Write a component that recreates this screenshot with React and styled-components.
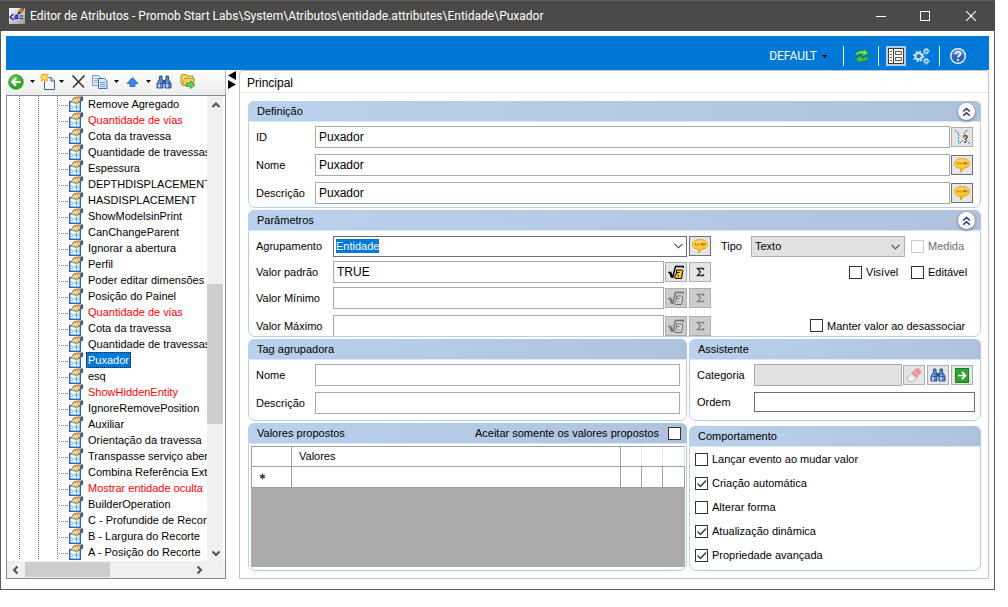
import React, { useEffect, useRef } from "react";
import styled, { createGlobalStyle, css } from "styled-components";

const Global = createGlobalStyle`
  *, *::before, *::after { box-sizing: border-box; }
  body { margin: 0; background: #fff; }
  body, button, input, select, table {
    font-family: "Liberation Sans", Arial, sans-serif;
    font-size: 11px;
    line-height: 14px;
    color: #000;
  }
  button { padding: 0; border: 0; background: none; display: inline-flex; align-items: center; justify-content: center; }
  svg { display: block; flex: none; }
`;

const Page = styled.div`
  min-height: 100vh;
  display: flex;
  padding: 0 13px 17px 0;
`;
const Window = styled.main`
  flex: 1;
  min-width: 0;
  display: flex;
  flex-direction: column;
  border: 1px solid #5b5b5b;
  border-top: 0;
  background: #fff;
`;

/* ---------- title bar ---------- */
const TitleBar = styled.header`
  height: 31px;
  margin: 0 -1px;
  padding: 0 2px 0 9px;
  display: flex;
  align-items: center;
  background: #4b4a48;
  border-top: 1px solid #5e5d5b;
`;
const Title = styled.h1`
  flex: 1;
  min-width: 0;
  margin: 0 0 0 5px;
  font: 400 12px/16px Roboto, "Noto Sans", sans-serif;
  color: #fff;
  white-space: nowrap;
  overflow: hidden;
`;
const CaptionButton = styled.button`
  width: 45px;
  height: 30px;
`;

/* ---------- ribbon ---------- */
const Content = styled.div`
  flex: 1;
  display: flex;
  flex-direction: column;
  padding: 5px 5px 10px;
`;
const Ribbon = styled.nav`
  height: 34px;
  flex: none;
  padding: 6px 21px 0 0;
  display: flex;
  align-items: center;
  justify-content: flex-end;
  background: #0078d7;
`;
const ProfileButton = styled.button`
  gap: 5px;
  margin-right: 16px;
  font: 400 12px/16px Roboto, "Noto Sans", sans-serif;
  color: #fff;
`;
const RibbonDivider = styled.span`
  width: 1px;
  height: 20px;
  background: #e6f1fb;
`;
const RibbonButton = styled.button`
  width: 20px;
  height: 20px;
  margin: ${(p) => p.$space};
  background: ${(p) => (p.$active ? "#b9cde6" : "none")};
`;

/* ---------- body ---------- */
const Body = styled.div`
  flex: 1;
  display: flex;
`;
const Sidebar = styled.aside`
  flex: none;
  width: 220px;
  display: flex;
  flex-direction: column;
`;
const Tools = styled.div`
  height: 25px;
  flex: none;
  display: flex;
  align-items: center;
  padding: 0 0 2px 2px;
  background: linear-gradient(#fefefe, #ededed);
  border-right: 1px solid #b4b4b4;
`;
const Tool = styled.button`
  width: 16px;
  height: 18px;
  margin-left: ${(p) => p.$gap || 0}px;
`;
const CaretTool = styled.button`
  width: ${(p) => (p.$narrow ? 10 : 16)}px;
  height: 18px;
`;
const TreeBox = styled.div`
  flex: 1;
  display: grid;
  grid-template-columns: minmax(0, 1fr) 16px 2px;
  grid-template-rows: 1fr 17px;
  border: 1px solid #828790;
`;
const Tree = styled.ul`
  list-style: none;
  margin: 0;
  padding: 0;
  overflow: hidden;
`;
const dotsDown = "repeating-linear-gradient(#767676 0 1px, #fff 1px 2px)";
const dotsAcross = "repeating-linear-gradient(90deg, #767676 0 1px, #fff 1px 2px)";
const TreeRow = styled.li`
  height: 16px;
  padding-left: 62px;
  display: flex;
  align-items: center;
  background: ${dotsDown} 12px 0 / 1px 16px no-repeat, ${dotsDown} 31px 0 / 1px 16px no-repeat,
    ${dotsDown} 50px 0 / 1px 16px no-repeat, ${dotsAcross} 52px 9px / 10px 1px no-repeat;
`;
const TreeLabel = styled.span`
  height: 16px;
  margin-left: 2px;
  padding: 0 2px;
  line-height: 16px;
  white-space: nowrap;
  color: ${(p) => (p.$red ? "#ff0000" : "#000")};
  ${(p) =>
    p.$selected &&
    css`
      color: #fff;
      background: #0078d7;
      outline: 1px dotted #10243a;
      outline-offset: -1px;
    `}
`;
const VScroll = styled.div`
  display: flex;
  flex-direction: column;
  background: #f0f0f0;
`;
const HScroll = styled.div`
  grid-column: 1 / 4;
  padding-right: 18px;
  display: flex;
  background: #f0f0f0;
`;
const ScrollArrow = styled.button`
  width: 17px;
  height: 17px;
  flex: none;
`;
const VThumb = styled.div`
  height: 140px;
  margin: auto 0 120px;
  background: #cdcdcd;
`;
const HThumb = styled.div`
  width: 85px;
  height: 15px;
  margin: 1px auto 0 1px;
  background: #cdcdcd;
`;
const Splitter = styled.div`
  width: 13px;
  flex: none;
  padding: 1px 2px;
`;

/* ---------- property panel ---------- */
const Panel = styled.section`
  flex: 1;
  min-width: 0;
  display: flex;
  flex-direction: column;
  border: 1px solid #c3c3c3;
  border-radius: 4px 4px 0 0;
`;
const PanelTitle = styled.h2`
  height: 22px;
  margin: 0;
  padding: 0 7px;
  font-size: 12px;
  font-weight: 400;
  line-height: 24px;
  border-bottom: 1px solid #e3e3e3;
`;
const Groups = styled.div`
  flex: 1;
  padding: 8px 7px 7px 8px;
  display: flex;
  flex-direction: column;
  gap: 2px;
`;
const LowerGroups = styled.div`
  flex: 1;
  display: grid;
  grid-template-columns: minmax(0, 1fr) 292px;
  gap: 2px;
`;
const Column = styled.div`
  display: flex;
  flex-direction: column;
  gap: ${(p) => p.$gap}px;
`;
const GroupBox = styled.section`
  flex: ${(p) => (p.$grow ? 1 : "none")};
  display: flex;
  flex-direction: column;
  border: 1px solid #b5cee9;
  border-radius: 7px;
`;
const GroupHeader = styled.div`
  height: 21px;
  margin: -1px -1px 0;
  padding: 0 6px 0 9px;
  flex: none;
  display: flex;
  align-items: center;
  justify-content: space-between;
  background: linear-gradient(90deg, #b9d1ec, #afc2dd);
  border-bottom: 1px solid #dbe6f4;
  border-radius: 6px 6px 0 0;
`;
const GroupTitle = styled.h3`
  margin: 0;
  font-size: 11px;
  font-weight: 400;
`;
const CollapseButton = styled.button`
  width: 17px;
  height: 17px;
  margin-top: 1px;
  border-radius: 50%;
  background: #fff;
  box-shadow: 0 1px 2px 1px #8592aa;
`;
const GroupBody = styled.div`
  flex: 1;
  padding: ${(p) => p.$pad || "4px 7px"};
  display: flex;
  flex-direction: column;
  gap: ${(p) => p.$gap || 0}px;
`;
const Field = styled.div`
  height: 22px;
  display: flex;
  align-items: center;
  gap: 1px;
`;
const FieldLabel = styled.label`
  width: ${(p) => p.$width || 58}px;
  flex: none;
`;
const TextInput = styled.input`
  flex: 1;
  min-width: 0;
  width: 100%;
  height: ${(p) => (p.$strong ? 20 : 22)}px;
  padding: 0 3px 1px;
  font-size: 12px;
  border: 1px solid ${(p) => (p.$strong ? "#707070" : "#a9a9b0")};
  border-radius: 0;
  background: ${(p) => (p.disabled ? "#e1e1e1" : "#fff")};
  outline: 0;
  ${(p) => p.$open && "height: 100%; border-bottom: 0;"}
`;
const SquareButton = styled.button`
  width: 22px;
  height: 20px;
  flex: none;
  border: 1px solid ${(p) => (p.$strong ? "#707070" : "#adadad")};
  background: ${(p) => (p.disabled ? "#cccccc" : "#e5e5e5")};
  & + & { margin-left: 1px; }
`;
const Parameters = styled.div`
  display: flex;
  padding: 4px 7px 0;
`;
const ParameterFields = styled.div`
  flex: 1;
  min-width: 0;
  display: flex;
  flex-direction: column;
  gap: 4px;
`;
const ParameterOptions = styled.div`
  width: 262px;
  flex: none;
  padding: 0 2px 0 10px;
  display: flex;
  flex-direction: column;
  gap: 4px;
`;
const OptionRow = styled.div`
  height: ${(p) => (p.$top ? 21 : 22)}px;
  display: flex;
  align-items: center;
  margin-top: ${(p) => p.$top || 0}px;
`;
const LastField = styled(Field)`
  height: 21px;
  margin-top: 2px;
`;
const PickerField = styled(Field)`
  padding-right: 2px;
`;
const Combo = styled.div`
  flex: 1;
  min-width: 0;
  height: 21px;
  margin-right: 1px;
  padding: 0 3px 0 2px;
  display: flex;
  align-items: center;
  border: 1px solid #6e6e6e;
`;
const ComboInput = styled.input`
  flex: 1;
  min-width: 0;
  height: 14px;
  padding: 0;
  border: 0;
  outline: 0;
  background: none;
  &::selection { background: #0078d7; color: #fff; }
`;
const SelectWrap = styled.span`
  position: relative;
  width: 154px;
  height: 21px;
  margin-right: 6px;
  display: flex;
  & > svg { position: absolute; right: 5px; top: 8px; pointer-events: none; }
`;
const Select = styled.select`
  flex: 1;
  appearance: none;
  padding: 0 3px;
  border: 1px solid #adadad;
  border-radius: 0;
  background: #e1e1e1;
`;
const CheckLabel = styled.label`
  display: inline-flex;
  align-items: center;
  gap: 4px;
  white-space: nowrap;
  color: ${(p) => (p.$dim ? "#6d6d6d" : "#000")};
  flex-direction: ${(p) => (p.$reverse ? "row-reverse" : "row")};
  ${(p) => p.$reverse && "gap: 9px;"}
  ${(p) => p.$width && `width: ${p.$width}px;`}
`;
const checkMark =
  "url(\"data:image/svg+xml,%3Csvg xmlns='http://www.w3.org/2000/svg' width='11' height='11'%3E%3Cpath d='M1.5 5.5l3 3 5.500-6' fill='none' stroke='%23333' stroke-width='1.300'/%3E%3C/svg%3E\")";
const Check = styled.input.attrs({ type: "checkbox" })`
  appearance: none;
  width: 13px;
  height: 13px;
  margin: 0;
  flex: none;
  border: 1px solid #333;
  background: #fff;
  &:checked { background: #fff ${checkMark} center no-repeat; }
  &:disabled { border-color: #cccccc; }
`;
const CheckList = styled.div`
  display: flex;
  flex-direction: column;
  padding: 0 5px;
`;
const CheckRow = styled.div`
  height: 24px;
  display: flex;
  align-items: center;
`;
const OptionsRight = styled(OptionRow)`
  justify-content: flex-end;
  gap: 2px;
`;

/* ---------- values grid ---------- */
const GridArea = styled.div`
  flex: 1;
  margin: 2px 1px 3px 2px;
  background: #ababab;
  border-top: 1px solid #a0a0a0;
`;
const ValuesTable = styled.table`
  width: 100%;
  table-layout: fixed;
  border-collapse: collapse;
  background: #fff;
  th, td { height: 21px; padding: 0 7px; font-weight: 400; text-align: left; border: 1px solid #a0a0a0; }
  th { height: 19px; border-top: 0; }
  th + th + th { border-left-color: #e3e3e3; border-right-color: #e3e3e3; }
`;
const Col = styled.col`
  width: ${(p) => p.$w}px;
`;

/* ---------- icons ---------- */
const Caret = ({ color = "#000" }) => (
  <svg width="5" height="3" viewBox="0 0 5 3"><path d="M0 0h5L2.500 3z" fill={color} /></svg>
);
const Chevron = ({ dir = "down", color = "#505050", w = 2 }) => {
  const d = { down: "M1.500 3.500L5 7l3.500-3.500", up: "M1.500 7L5 3.500 8.500 7", left: "M6.500 1.500L3 5l3.500 3.500", right: "M3.500 1.500L7 5 3.500 8.500" }[dir];
  return <svg width="10" height="10" viewBox="0 0 10 10"><path d={d} fill="none" stroke={color} strokeWidth={w} /></svg>;
};
const SelectArrow = () => (
  <svg width="9" height="6" viewBox="0 0 9 6"><path d="M.5.8l4 4 4-4" fill="none" stroke="#444" strokeWidth="1.100" /></svg>
);
const AppIcon = () => (
  <svg width="16" height="16" viewBox="0 0 16 16">
    <defs><linearGradient id="app" x1="0" y1="0" x2="1" y2="1"><stop offset="0" stopColor="#fff" /><stop offset="1" stopColor="#9a9a9a" /></linearGradient></defs>
    <rect width="16" height="16" fill="url(#app)" />
    <path d="M4.500 6L1 9l3.500 3M9 7.500H7c-1 0-1.500 2-1 3 .8.700 2.300-.8 2.500-3V11M10.500 8h3.500M10.500 10.500h3.500" fill="none" stroke="#1414c8" strokeWidth="1.200" />
    <path d="M9.500 4L11 1.500 13 0h2l-1 3-2.500 2.500z" fill="#d87a16" stroke="#3b2409" strokeWidth=".6" />
    <path d="M7.500 7l2-3 2 1.500z" fill="#222" />
  </svg>
);
const AttributeIcon = () => (
  <svg width="15" height="16" viewBox="0 0 15 16">
    <rect x=".7" y="5.700" width="10.600" height="9.600" fill="#eef6fd" stroke="#1668c2" strokeWidth="1.400" />
    <path d="M7.500 8.500v5M5 11h5" stroke="#5a9fde" />
    <path d="M2.500 10.500h1.500M2.500 12.500h1.500" stroke="#74ade2" />
    <path d="M1.500 6L5 2l3-1h4v3.500L9 6.500 7.500 7.500 6 6.800z" fill="#edbd6b" />
    <path d="M1.500 6L5 2l3-1h3M4 6.500l2.500.5 1 1L12 4.500" fill="none" stroke="#7a5526" strokeWidth=".8" />
    <path d="M4 5.300l3-2M6 5.800l3-2" stroke="#fff3cf" strokeWidth=".8" />
    <path d="M11.300.5H14v4.300l-2.700.700z" fill="#40507c" />
  </svg>
);
const BackIcon = () => (
  <svg width="16" height="16" viewBox="0 0 16 16">
    <defs><radialGradient id="back" cx=".4" cy=".3"><stop offset="0" stopColor="#7ed957" /><stop offset="1" stopColor="#2fa82c" /></radialGradient></defs>
    <circle cx="8" cy="8" r="7.300" fill="url(#back)" stroke="#1f931f" strokeWidth=".8" />
    <path d="M12.500 8H4.500M8 4.300L4.300 8 8 11.700" fill="none" stroke="#fff" strokeWidth="2" />
  </svg>
);
const NewIcon = () => (
  <svg width="16" height="18" viewBox="0 0 16 18">
    <path d="M4.500 4.500h6.500l3.500 3.500v8.500h-10z" fill="#f4f7fc" stroke="#4c5f88" />
    <path d="M11 4.500V8h3.500" fill="#c9d6ea" stroke="#4c5f88" />
    <path d="M4.500 0v9M0 4.500h9M1.200 1.200l6.600 6.600M7.800 1.200L1.200 7.800" stroke="#f5a01c" strokeWidth="1.700" />
    <circle cx="4.500" cy="4.500" r="2.200" fill="#ffe45c" />
  </svg>
);
const DeleteIcon = () => (
  <svg width="15" height="15" viewBox="0 0 15 15">
    <path d="M1.500 1.500L13 13.500M13.500 1.500L2 13.500" stroke="#3a3a3a" strokeWidth="1.700" />
  </svg>
);
const CopyIcon = () => (
  <svg width="16" height="16" viewBox="0 0 16 16">
    <path d="M.5 1.500h6l2.500 2.500v7.500H.5z" fill="#e6effb" stroke="#6f93cf" />
    <path d="M2 4.500h4M2 6.500h5M2 8.500h5" stroke="#8fb0e2" />
    <path d="M6.500 4.500h6l2.500 2.500v7.500H6.500z" fill="#dce9fa" stroke="#4a72b8" />
    <path d="M8 8.500h5.500M8 10.500h5.500M8 12.500h5.500" stroke="#6f97d6" />
  </svg>
);
const UpIcon = () => (
  <svg width="13" height="10" viewBox="0 0 13 10">
    <path d="M6.500.5L12 6.500H9v3H4v-3H1z" fill="#3f86ea" stroke="#2a63c2" strokeWidth=".8" />
  </svg>
);
const BinocularsIcon = () => (
  <svg width="16" height="14" viewBox="0 0 16 14">
    <path d="M3.500 1h2.500v3l1 1v8H1V8.500L3.500 4zM10 1h2.500v3L15 8.500V13H9V5l1-1z" fill="#5b86c8" stroke="#27488a" strokeWidth=".9" />
    <path d="M7 5h2v3.500H7z" fill="#27488a" />
    <path d="M3 7.500v5M11 7.500v5" stroke="#dbe8fa" strokeWidth="1.500" />
    <path d="M1.500 8.500h5M9.500 8.500h5" stroke="#27488a" strokeWidth=".8" />
  </svg>
);
const FolderIcon = () => (
  <svg width="16" height="15" viewBox="0 0 16 15">
    <path d="M1 2L2 .5h4l1 1.500h6v3h1.500L13 11.500H2.500L1 9z" fill="#f5d469" stroke="#b58a1a" />
    <path d="M2.500 11L4.500 4.500h9.500" fill="none" stroke="#c59a2a" />
    <path d="M6 9h4.500V6.800l4.500 4-4.500 3.900v-2.400H6z" fill="#6bcf4a" stroke="#2f8a25" strokeWidth=".8" />
  </svg>
);
const RefreshIcon = () => (
  <svg width="16" height="16" viewBox="0 0 16 16">
    <path d="M1 8.200C1.500 4 4.500 2.500 9.500 2.800V.8L14.500 5l-5.500 3.500V6.300C6 5.600 3.500 6 1 8.200z" fill="#6fdc55" stroke="#1f8a22" strokeWidth=".7" />
    <path d="M15 7.800c-.5 4.200-3.500 5.700-8.500 5.400v2L1.500 11 7 7.500v2.200c3 .7 5.500.3 8-1.900z" fill="#4cc03e" stroke="#1f8a22" strokeWidth=".7" />
  </svg>
);
const FormIcon = () => (
  <svg width="16" height="16" viewBox="0 0 16 16">
    <rect x=".5" y=".5" width="15" height="15" fill="#fafafa" stroke="#3f3f3f" />
    <path d="M5.500 1v14" stroke="#3f3f3f" />
    <path d="M2 3.500h2M2 6.500h2M2 9.500h2M2 12.500h2" stroke="#555" />
    <path d="M7.500 3.500h6v3h-6zM7.500 9.500h6v3h-6z" fill="#fff" stroke="#555" />
  </svg>
);
const GearsIcon = () => (
  <svg width="17" height="17" viewBox="0 0 17 17">
    <g fill="none" stroke="#d5e2f1">
      <circle cx="5.700" cy="8.300" r="3.200" strokeWidth="2" />
      <circle cx="5.700" cy="8.300" r="4.900" strokeWidth="1.600" strokeDasharray="2 1.850" />
      <circle cx="13.300" cy="3.300" r="1.800" strokeWidth="1.300" />
      <circle cx="13.300" cy="3.300" r="2.800" strokeWidth="1" strokeDasharray="1.200 1" />
      <circle cx="13.300" cy="13.300" r="1.800" strokeWidth="1.300" />
      <circle cx="13.300" cy="13.300" r="2.800" strokeWidth="1" strokeDasharray="1.200 1" />
    </g>
  </svg>
);
const HelpIcon = () => (
  <svg width="18" height="18" viewBox="0 0 18 18">
    <circle cx="9" cy="9" r="7.300" fill="#2c62c9" stroke="#e8f0fb" strokeWidth="1.500" />
    <path d="M3.500 7a6 6 0 0 1 11 0c-3 1.500-8 1.500-11 0z" fill="#6d9ae6" />
    <path d="M6.500 7c0-3.300 5-3.300 5-.3 0 2-2.500 2-2.500 3.800M9 12v2" fill="none" stroke="#fff" strokeWidth="1.700" />
  </svg>
);
const CollapseIcon = () => (
  <svg width="9" height="10" viewBox="0 0 9 10"><path d="M1.200 4.500l3.300-3 3.300 3M1.200 8.700l3.300-3 3.300 3" fill="none" stroke="#1f3264" strokeWidth="1.500" /></svg>
);
const LinkIcon = () => (
  <svg width="18" height="16" viewBox="0 0 18 16">
    <g fill="none" strokeDasharray="2 1">
      <path d="M2 1l4 4M14 1l-3 4M7 14l3-3M13 11l4 4" stroke="#2a4bd0" />
      <path d="M5.500 5v9h2" stroke="#20a0e0" />
    </g>
    <path d="M10.500 8.200c0-2.200 3.500-2.200 3.500-.3 0 1.400-1.800 1.400-1.800 2.800M12.200 12v2" fill="none" stroke="#7a3c10" strokeWidth="1.700" />
  </svg>
);
const SpeechIcon = () => (
  <svg width="16" height="15" viewBox="0 0 16 15">
    <defs><linearGradient id="sp" x1="0" y1="0" x2="0" y2="1"><stop offset="0" stopColor="#ffd868" /><stop offset="1" stopColor="#fbc400" /></linearGradient></defs>
    <path d="M8 .6c4.300 0 7.400 2 7.400 4.900 0 2.500-2.400 4.300-5.600 4.800L6.500 14l.3-3.500C3.200 10.200.6 8.200.6 5.500.6 2.600 3.700.6 8 .6z" fill="url(#sp)" stroke="#d8981c" strokeWidth=".9" />
    <path d="M3.500 4v2h1.500M6 4v2h1.500M9 4.500h1.500v1.500H9zM11.500 4.500H13v1.500h-1.500z" fill="none" stroke="#c8701c" />
  </svg>
);
const RootIcon = ({ dim }) => {
  const ink = dim ? "#747474" : "#000";
  return (
    <svg width="16" height="16" viewBox="0 0 16 16">
      <path d="M0 8.500L2 8" fill="none" stroke={ink} strokeWidth="1.200" />
      <path d="M2 8l2.200 5.500" fill="none" stroke={ink} strokeWidth="2.400" />
      <path d="M4.500 14L7.500 2.500h8V4" fill="none" stroke={ink} strokeWidth="1.400" />
      <path d="M8.500 6h5.300q1.200 0 1 1.200l-1.300 7.300H7.800q-1.300 0-1-1.300l.4-2q.3-1.300 1.500-1.300H8.300z" fill={dim ? "#d4d4d4" : "#ffc423"} stroke={ink} />
      <path d="M9 8.500h2.500M9.500 12h1.500" stroke={ink} />
    </svg>
  );
};
const SigmaIcon = ({ dim }) => (
  <svg width="9" height="10" viewBox="0 0 9 10">
    <path d="M7.500 3V1.500H1.500l3 3.500-3 3.500h6V7" fill="none" stroke={dim ? "#858585" : "#303030"} strokeWidth="1.400" />
  </svg>
);
const EraserIcon = () => (
  <svg width="16" height="16" viewBox="0 0 16 16">
    <path d="M9 2.500Q11 .8 13.300 2q2.200 1.500 1.200 4L10.500 11 5.500 6.500z" fill="#f0909f" stroke="#dca4ab" strokeWidth=".7" />
    <path d="M5.700 6.300l4.700 4.500L6.500 14.500q-2.500 1-4.500-.5-1.700-2-.5-4z" fill="#f4f1f1" stroke="#a9a1a1" strokeWidth=".8" />
    <path d="M8.500 4.500l4 4" stroke="#fcd2d7" />
  </svg>
);
const GoIcon = () => (
  <svg width="14" height="15" viewBox="0 0 14 15">
    <rect x=".5" y=".5" width="13" height="14" fill="#2fa52f" stroke="#1a7a1e" />
    <path d="M3 7.500h7M7 3.800l3.500 3.700L7 11.200" fill="none" stroke="#fff" strokeWidth="1.700" />
  </svg>
);
const SplitArrows = () => (
  <svg width="8" height="18" viewBox="0 0 8 18"><path d="M8 0v9L0 4.500zM0 9v9l8-4.500z" fill="#000" /></svg>
);
const NewRowIcon = () => (
  <svg width="7" height="7" viewBox="0 0 7 7">
    <path d="M3.500.5v6M.8 2l5.400 3M6.200 2L.8 5" stroke="#444" />
    <circle cx="3.500" cy="3.500" r="2" fill="#444" />
  </svg>
);

/* ---------- data ---------- */
const items = [
  ["Remove Agregado"], ["Quantidade de vias", 1], ["Cota da travessa"], ["Quantidade de travessas"],
  ["Espessura"], ["DEPTHDISPLACEMENT"], ["HASDISPLACEMENT"], ["ShowModelsinPrint"], ["CanChangeParent"],
  ["Ignorar a abertura"], ["Perfil"], ["Poder editar dimensões"], ["Posição do Painel"],
  ["Quantidade de vias", 1], ["Cota da travessa"], ["Quantidade de travessas"], ["Puxador", 0, 1], ["esq"],
  ["ShowHiddenEntity", 1], ["IgnoreRemovePosition"], ["Auxiliar"], ["Orientação da travessa"],
  ["Transpasse serviço abertura"], ["Combina Referência Externa"], ["Mostrar entidade oculta", 1],
  ["BuilderOperation"], ["C - Profundide de Recorte"], ["B - Largura do Recorte"], ["A - Posição do Recorte"],
];
const behaviours = [
  ["Lançar evento ao mudar valor", false], ["Criação automática", true], ["Alterar forma", false],
  ["Atualização dinâmica", true], ["Propriedade avançada", true],
];

const Group = ({ title, grow, collapsible, extra, children }) => (
  <GroupBox $grow={grow}>
    <GroupHeader>
      <GroupTitle>{title}</GroupTitle>
      {extra}
      {collapsible && <CollapseButton aria-label={`Recolher ${title}`}><CollapseIcon /></CollapseButton>}
    </GroupHeader>
    {children}
  </GroupBox>
);

const TextField = ({ id, label, value, children }) => (
  <Field>
    <FieldLabel htmlFor={id}>{label}</FieldLabel>
    <TextInput id={id} defaultValue={value} />
    {children}
  </Field>
);

const FormulaField = ({ as: Row = Field, id, label, value, dim, open }) => (
  <Row>
    <FieldLabel htmlFor={id} $width={76}>{label}</FieldLabel>
    <TextInput id={id} defaultValue={value} $open={open} />
    <SquareButton disabled={dim} aria-label="Fórmula"><RootIcon dim={dim} /></SquareButton>
    <SquareButton disabled={dim} aria-label="Somatório"><SigmaIcon dim={dim} /></SquareButton>
  </Row>
);

export default function App() {
  const groupInput = useRef(null);
  useEffect(() => {
    groupInput.current.focus();
    groupInput.current.select();
  }, []);

  return (
    <>
      <Global />
      <Page>
        <Window>
          <TitleBar>
            <AppIcon />
            <Title>Editor de Atributos - Promob Start Labs\System\Atributos\entidade.attributes\Entidade\Puxador</Title>
            <CaptionButton aria-label="Minimizar">
              <svg width="10" height="10"><path d="M0 5.500h10" stroke="#fff" /></svg>
            </CaptionButton>
            <CaptionButton aria-label="Maximizar">
              <svg width="11" height="11"><rect x=".5" y=".5" width="9" height="9" fill="none" stroke="#fff" /></svg>
            </CaptionButton>
            <CaptionButton aria-label="Fechar">
              <svg width="10" height="10"><path d="M0 0l10 10M10 0L0 10" stroke="#fff" strokeWidth="1.100" /></svg>
            </CaptionButton>
          </TitleBar>
          <Content>
            <Ribbon>
              <ProfileButton>DEFAULT<Caret /></ProfileButton>
              <RibbonDivider />
              <RibbonButton $space="0 6px 0 8px" aria-label="Atualizar"><RefreshIcon /></RibbonButton>
              <RibbonDivider />
              <RibbonButton $space="0 5px 0 7px" $active aria-label="Formulário"><FormIcon /></RibbonButton>
              <RibbonButton $space="0 8px 0 0" aria-label="Configurações"><GearsIcon /></RibbonButton>
              <RibbonDivider />
              <RibbonButton $space="0 0 0 8px" aria-label="Ajuda"><HelpIcon /></RibbonButton>
            </Ribbon>
            <Body>
              <Sidebar>
                <Tools>
                  <Tool aria-label="Voltar"><BackIcon /></Tool>
                  <CaretTool aria-label="Histórico"><Caret /></CaretTool>
                  <Tool aria-label="Novo"><NewIcon /></Tool>
                  <CaretTool $narrow aria-label="Opções de novo"><Caret /></CaretTool>
                  <Tool $gap={4} aria-label="Excluir"><DeleteIcon /></Tool>
                  <Tool $gap={6} aria-label="Copiar"><CopyIcon /></Tool>
                  <CaretTool aria-label="Opções de cópia"><Caret /></CaretTool>
                  <Tool aria-label="Mover para cima"><UpIcon /></Tool>
                  <CaretTool aria-label="Opções de mover"><Caret /></CaretTool>
                  <Tool aria-label="Localizar"><BinocularsIcon /></Tool>
                  <Tool $gap={8} aria-label="Exportar"><FolderIcon /></Tool>
                </Tools>
                <TreeBox>
                  <Tree>
                    {items.map(([name, red, selected], i) => (
                      <TreeRow key={i}>
                        <AttributeIcon />
                        <TreeLabel $red={red} $selected={selected}>{name}</TreeLabel>
                      </TreeRow>
                    ))}
                  </Tree>
                  <VScroll>
                    <ScrollArrow aria-label="Rolar para cima"><Chevron dir="up" /></ScrollArrow>
                    <VThumb />
                    <ScrollArrow aria-label="Rolar para baixo"><Chevron /></ScrollArrow>
                  </VScroll>
                  <span />
                  <HScroll>
                    <ScrollArrow aria-label="Rolar para a esquerda"><Chevron dir="left" /></ScrollArrow>
                    <HThumb />
                    <ScrollArrow aria-label="Rolar para a direita"><Chevron dir="right" /></ScrollArrow>
                  </HScroll>
                </TreeBox>
              </Sidebar>
              <Splitter><SplitArrows /></Splitter>
              <Panel>
                <PanelTitle>Principal</PanelTitle>
                <Groups>
                  <Group title="Definição" collapsible>
                    <GroupBody $gap={6} $pad="4px 7px 3px">
                      <TextField id="id" label="ID" value="Puxador">
                        <SquareButton aria-label="Referências"><LinkIcon /></SquareButton>
                      </TextField>
                      <TextField id="name" label="Nome" value="Puxador">
                        <SquareButton $strong aria-label="Traduzir nome"><SpeechIcon /></SquareButton>
                      </TextField>
                      <TextField id="desc" label="Descrição" value="Puxador">
                        <SquareButton $strong aria-label="Traduzir descrição"><SpeechIcon /></SquareButton>
                      </TextField>
                    </GroupBody>
                  </Group>

                  <Group title="Parâmetros" collapsible>
                    <Parameters>
                      <ParameterFields>
                        <Field>
                          <FieldLabel htmlFor="grouping" $width={76}>Agrupamento</FieldLabel>
                          <Combo>
                            <ComboInput id="grouping" ref={groupInput} defaultValue="Entidade" />
                            <SelectArrow />
                          </Combo>
                          <SquareButton $strong aria-label="Traduzir agrupamento"><SpeechIcon /></SquareButton>
                        </Field>
                        <FormulaField id="default" label="Valor padrão" value="TRUE" />
                        <FormulaField id="min" label="Valor Mínimo" dim />
                        <FormulaField as={LastField} id="max" label="Valor Máximo" dim open />
                      </ParameterFields>
                      <ParameterOptions>
                        <OptionRow>
                          <FieldLabel htmlFor="type" $width={30}>Tipo</FieldLabel>
                          <SelectWrap>
                            <Select id="type" defaultValue="Texto"><option>Texto</option></Select>
                            <SelectArrow />
                          </SelectWrap>
                          <CheckLabel $dim><Check disabled />Medida</CheckLabel>
                        </OptionRow>
                        <OptionsRight>
                          <CheckLabel $width={60}><Check />Visível</CheckLabel>
                          <CheckLabel $width={60}><Check />Editável</CheckLabel>
                        </OptionsRight>
                        <OptionsRight $top={28}>
                          <CheckLabel $width={161}><Check />Manter valor ao desassociar</CheckLabel>
                        </OptionsRight>
                      </ParameterOptions>
                    </Parameters>
                  </Group>

                  <LowerGroups>
                    <Column $gap={2}>
                      <Group title="Tag agrupadora">
                        <GroupBody $gap={6} $pad="4px 6px 6px 7px">
                          <TextField id="tag-name" label="Nome" />
                          <TextField id="tag-desc" label="Descrição" />
                        </GroupBody>
                      </Group>
                      <Group
                        title="Valores propostos"
                        grow
                        extra={<CheckLabel $reverse><Check />Aceitar somente os valores propostos</CheckLabel>}
                      >
                        <GridArea>
                          <ValuesTable>
                            <colgroup><Col $w={40} /><col /><Col $w={21} /><Col $w={21} /><Col $w={22} /></colgroup>
                            <thead>
                              <tr><th /><th>Valores</th><th /><th /><th /></tr>
                            </thead>
                            <tbody>
                              <tr><td><NewRowIcon /></td><td /><td /><td /><td /></tr>
                            </tbody>
                          </ValuesTable>
                        </GridArea>
                      </Group>
                    </Column>
                    <Column $gap={5}>
                      <Group title="Assistente">
                        <GroupBody $gap={5} $pad="4px 5px 7px 7px">
                          <PickerField>
                            <FieldLabel htmlFor="category" $width={56}>Categoria</FieldLabel>
                            <TextInput id="category" disabled />
                            <SquareButton aria-label="Limpar categoria"><EraserIcon /></SquareButton>
                            <SquareButton aria-label="Procurar categoria"><BinocularsIcon /></SquareButton>
                            <SquareButton aria-label="Ir para categoria"><GoIcon /></SquareButton>
                          </PickerField>
                          <Field>
                            <FieldLabel htmlFor="order" $width={56}>Ordem</FieldLabel>
                            <TextInput id="order" $strong />
                          </Field>
                        </GroupBody>
                      </Group>
                      <Group title="Comportamento" grow>
                        <CheckList>
                          {behaviours.map(([label, on]) => (
                            <CheckRow key={label}>
                              <CheckLabel><Check defaultChecked={on} />{label}</CheckLabel>
                            </CheckRow>
                          ))}
                        </CheckList>
                      </Group>
                    </Column>
                  </LowerGroups>
                </Groups>
              </Panel>
            </Body>
          </Content>
        </Window>
      </Page>
    </>
  );
}
